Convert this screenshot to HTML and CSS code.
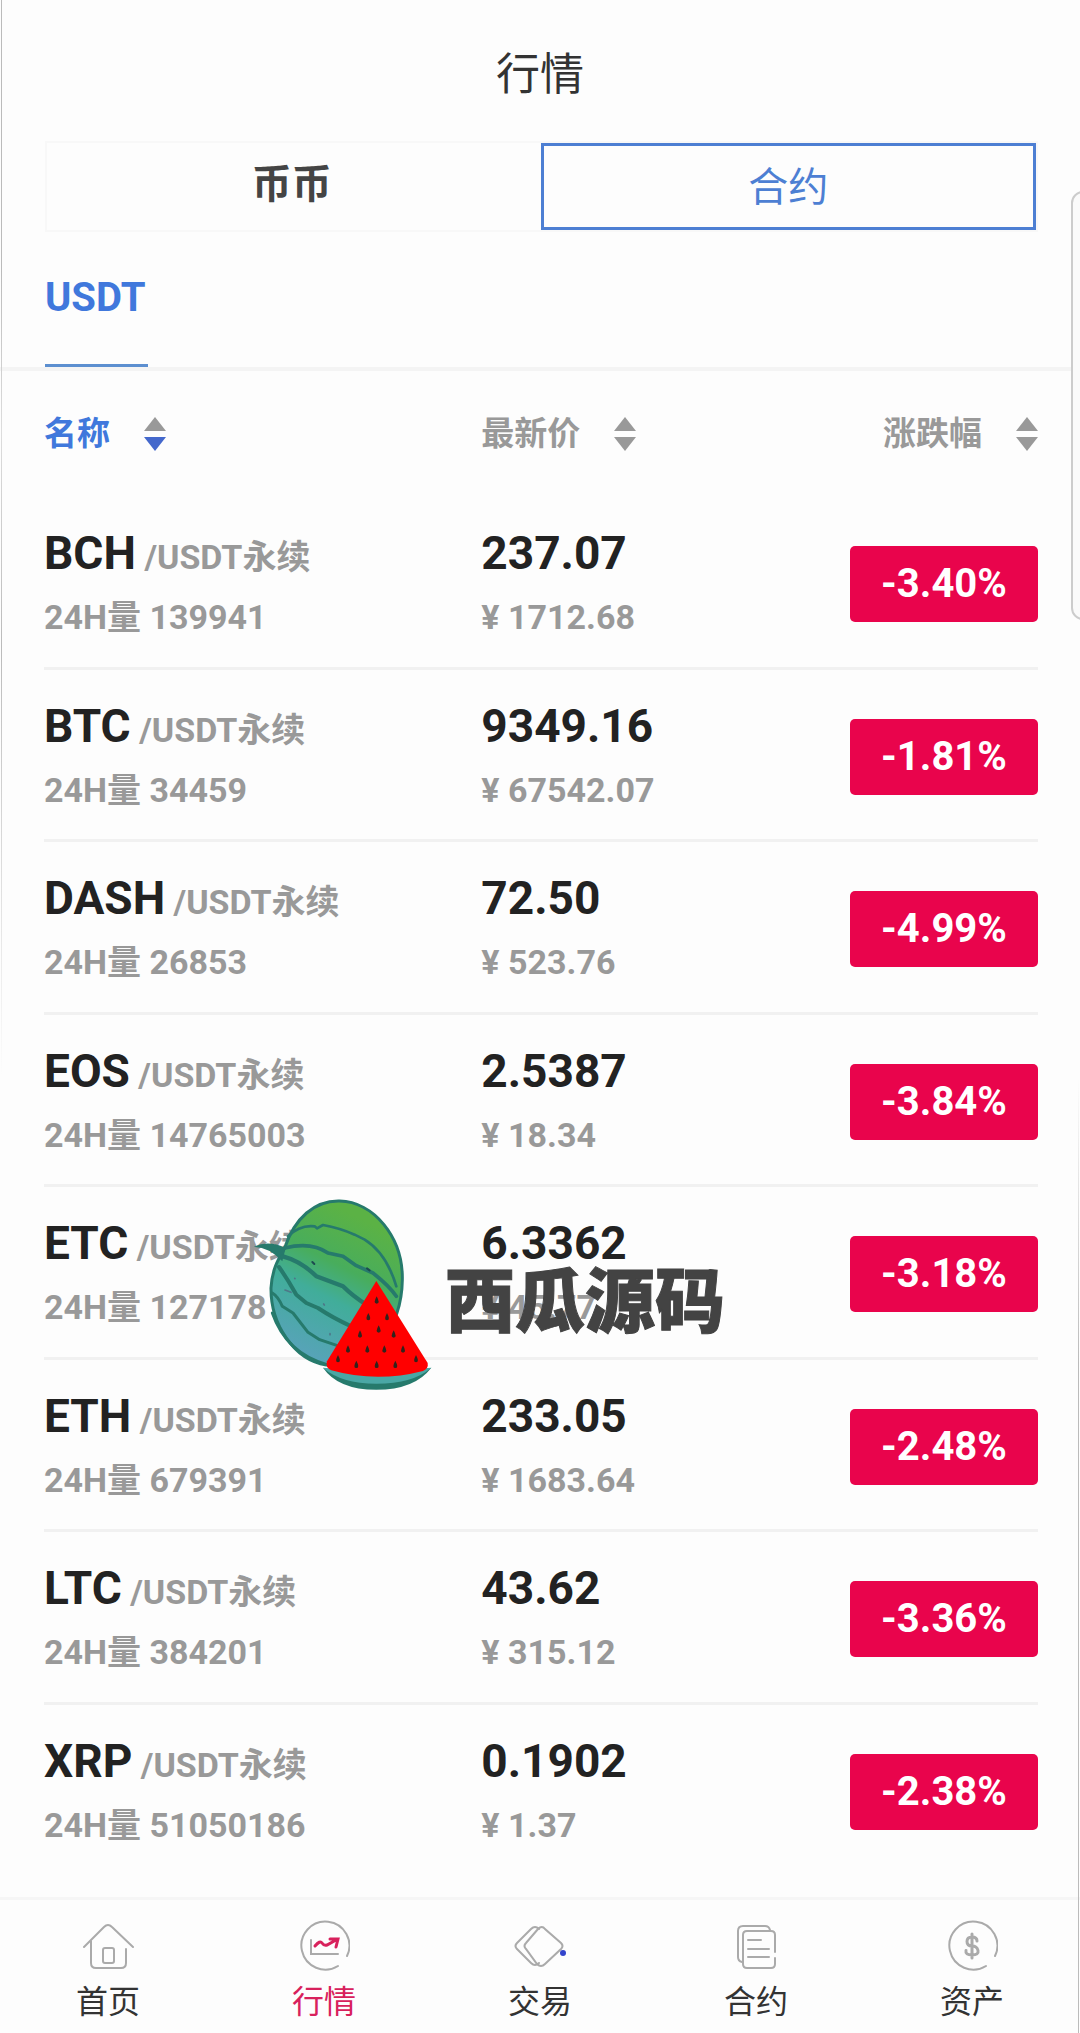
FILE: index.html
```html
<!DOCTYPE html>
<html lang="zh-CN">
<head>
    <meta charset="UTF-8">
    <meta name="viewport" content="width=device-width, initial-scale=1.0">
    <title>行情</title>
    <link rel="stylesheet" href="styles.css">
</head>
<body>
    <header class="header">
        <h1>行情</h1>
    </header>

    <div class="switch">
        <button type="button" class="switch-btn">币币</button>
        <button type="button" class="switch-btn active">合约</button>
    </div>

    <nav class="tabs">
        <a href="#usdt" class="tab">USDT</a>
    </nav>

    <table class="market">
        <thead>
            <tr>
                <th><button type="button" class="sort sort-active">名称 <svg class="arrows" viewBox="0 0 22 34"><path d="M11 0L22 14H0z"/><path class="down" d="M0 20h22L11 34z"/></svg></button></th>
                <th><button type="button" class="sort">最新价 <svg class="arrows" viewBox="0 0 22 34"><path d="M11 0L22 14H0z"/><path class="down" d="M0 20h22L11 34z"/></svg></button></th>
                <th><button type="button" class="sort">涨跌幅 <svg class="arrows" viewBox="0 0 22 34"><path d="M11 0L22 14H0z"/><path class="down" d="M0 20h22L11 34z"/></svg></button></th>
            </tr>
        </thead>
        <tbody>
            <tr>
                <td><div class="main">BCH<small> /USDT永续</small></div><div class="sub">24H量 139941</div></td>
                <td><div class="main">237.07</div><div class="sub">¥ 1712.68</div></td>
                <td><span class="change">-3.40%</span></td>
            </tr>
            <tr>
                <td><div class="main">BTC<small> /USDT永续</small></div><div class="sub">24H量 34459</div></td>
                <td><div class="main">9349.16</div><div class="sub">¥ 67542.07</div></td>
                <td><span class="change">-1.81%</span></td>
            </tr>
            <tr>
                <td><div class="main">DASH<small> /USDT永续</small></div><div class="sub">24H量 26853</div></td>
                <td><div class="main">72.50</div><div class="sub">¥ 523.76</div></td>
                <td><span class="change">-4.99%</span></td>
            </tr>
            <tr>
                <td><div class="main">EOS<small> /USDT永续</small></div><div class="sub">24H量 14765003</div></td>
                <td><div class="main">2.5387</div><div class="sub">¥ 18.34</div></td>
                <td><span class="change">-3.84%</span></td>
            </tr>
            <tr>
                <td><div class="main">ETC<small> /USDT永续</small></div><div class="sub">24H量 127178</div></td>
                <td><div class="main">6.3362</div><div class="sub">¥ 45.77</div></td>
                <td><span class="change">-3.18%</span></td>
            </tr>
            <tr>
                <td><div class="main">ETH<small> /USDT永续</small></div><div class="sub">24H量 679391</div></td>
                <td><div class="main">233.05</div><div class="sub">¥ 1683.64</div></td>
                <td><span class="change">-2.48%</span></td>
            </tr>
            <tr>
                <td><div class="main">LTC<small> /USDT永续</small></div><div class="sub">24H量 384201</div></td>
                <td><div class="main">43.62</div><div class="sub">¥ 315.12</div></td>
                <td><span class="change">-3.36%</span></td>
            </tr>
            <tr>
                <td><div class="main">XRP<small> /USDT永续</small></div><div class="sub">24H量 51050186</div></td>
                <td><div class="main">0.1902</div><div class="sub">¥ 1.37</div></td>
                <td><span class="change">-2.38%</span></td>
            </tr>
        </tbody>
    </table>

    <nav class="bottom-nav">
        <a href="#home">
            <svg viewBox="0 0 52 52"><path d="M2 27L22 7q4-4 8 0L51 27M9 21v22q0 5 5 5h25q5 0 5-5V29"/><rect x="21" y="28" width="11" height="15" rx="2"/></svg>
            首页
        </a>
        <a href="#market" class="current">
            <svg viewBox="0 0 52 52"><path d="M49 36A24 24 0 1 0 40 46"/><path d="M13 20v14h27"/><path class="red" d="M17 26q5-6 7-3t5 2l9-5M32 19l8 0-2 8"/></svg>
            行情
        </a>
        <a href="#trade">
            <svg viewBox="0 0 52 52"><path d="M25 9q-4-4-8 0L3 23q-3 3 0 6l14 14q4 4 8 0"/><path d="M24 9q4-4 7 0l16 14q3 3 0 6L31 44q-4 4-8 0L12 29q-3-3 0-6z"/><circle class="dot" cx="49" cy="33" r="3"/></svg>
            交易
        </a>
        <a href="#contract">
            <svg viewBox="0 0 52 52"><path d="M40 10q-1-4-5-4H13q-5 0-5 5v26q0 4 4 5"/><path d="M45 32V15q0-4-4-4H17q-4 0-4 4v29q0 4 4 4h24q4 0 4-4v-6M18 20h13M18 29h21M18 37h21"/></svg>
            合约
        </a>
        <a href="#assets">
            <svg viewBox="0 0 52 52"><path d="M49 36A24 24 0 1 0 40 46"/><path class="thick" d="M31 21q0-4-5-4t-5 4.500 5 4.500 6 4.500-6 4.500-6-4.500M26 14v24"/></svg>
            资产
        </a>
    </nav>

    <aside class="drawer-edge"></aside>

    <div class="watermark">
        <svg viewBox="40 55 540 579">
            <defs>
                <linearGradient id="rind" x1="0.700" y1="0" x2="0.300" y2="1">
                    <stop offset="0.100" stop-color="#5bb245"/>
                    <stop offset="0.400" stop-color="#48ad5c"/>
                    <stop offset="0.600" stop-color="#41ad9a"/>
                    <stop offset="1" stop-color="#5aa2bc"/>
                </linearGradient>
            </defs>
            <path d="M135 205C165 115 225 62 300 64C400 66 490 170 488 300C486 440 400 560 260 556C160 540 93 430 94 325C97 270 115 240 135 205Z" fill="url(#rind)" stroke="#267a6c" stroke-width="9"/>
            <path d="M42 202Q85 180 138 205L128 245Q85 200 42 202Z" fill="#267a6c"/>
            <g fill="none" stroke="#267a6c" stroke-linecap="round" stroke-linejoin="round">
                <path d="M145 170Q180 135 225 140L232 146L250 136Q300 145 345 165L375 180Q440 220 470 320" stroke-width="8"/>
                <path d="M135 205Q215 185 265 220L310 230L350 258L400 280Q450 320 470 350" stroke-width="11"/>
                <path d="M130 230Q185 245 230 290L270 305L310 320Q340 350 380 375" stroke-width="13"/>
                <path d="M118 262Q145 300 170 345L200 370L235 385Q280 415 335 440" stroke-width="12"/>
                <path d="M98 340Q115 350 128 380L160 400L205 458L240 480L300 500" stroke-width="9"/>
                <path d="M98 400Q140 520 260 554" stroke-width="9"/>
                <path d="M218 247l6 6M382 266l8 6" stroke="#1d4b50" stroke-width="6"/>
                <path d="M136 331l18 7M165 296l1 1M252 373l2 3M271 462v3" stroke="#4e7788" stroke-width="5"/>
            </g>
            <path d="M250 564Q410 625 575 564Q525 630 410 630Q295 630 250 564Z" fill="#267a6c"/>
            <path d="M250 564Q410 580 575 564Q520 612 410 612Q305 612 250 564Z" fill="#4aa7a5"/>
            <path d="M410 304L564 550Q567 567 550 574Q410 610 275 572Q256 564 262 545Z" fill="#f00"/>
            <g fill="#33231c">
                <path id="seed" d="M411 350q-12 22 0 22t0-22"/>
                <use href="#seed" x="-25" y="50"/><use href="#seed" x="31" y="50"/>
                <use href="#seed" x="6" y="87"/><use href="#seed" x="-50" y="102"/><use href="#seed" x="51" y="102"/>
                <use href="#seed" x="-86" y="147"/><use href="#seed" x="-28" y="147"/><use href="#seed" x="23" y="147"/><use href="#seed" x="79" y="147"/>
                <use href="#seed" x="-116" y="176"/><use href="#seed" x="118" y="176"/>
                <use href="#seed" x="-61" y="193"/><use href="#seed" y="193"/><use href="#seed" x="56" y="193"/>
            </g>
        </svg>
        <span>西瓜源码</span>
    </div>
</body>
</html>
```
FILE: styles.css
```css
* {
    box-sizing: border-box;
}
body {
    position: relative;
    display: flex;
    flex-direction: column;
    min-height: 100vh;
    margin: 0;
    overflow-x: hidden;
    background-color: #fdfdfd;
    color: #222;
    font-family: Roboto, "Noto Sans CJK SC", sans-serif;
}
/* thin shaded lines down the two sides of the screen */
body::before,
body::after {
    content: "";
    position: absolute;
    width: 1px;
}
body::before {
    top: 0;
    left: 1px;
    height: 53%;
    background: linear-gradient(#bbb 25%, #ddd 40%, #bbb 60%, transparent);
}
body::after {
    right: 1px;
    bottom: 0;
    height: 47%;
    background: linear-gradient(transparent, #bbb 30%);
}
button {
    padding: 0;
    border: none;
    background: none;
    font-family: inherit;
}
a {
    text-decoration: none;
}

/* title */
.header {
    padding: 43px 0 34px;
    text-align: center;
}
.header h1 {
    margin: 0;
    color: #333;
    font-size: 44px;
    font-weight: 400;
    line-height: 64px;
}

/* spot / contract switch */
.switch {
    display: flex;
    gap: 4px;
    height: 91px;
    margin: 0 42px 0 45px;
    border: 2px solid #f8f8f8;
}
.switch-btn {
    flex: 1;
    padding-bottom: 12px;
    color: #444;
    font-size: 40px;
    font-weight: 700;
}
.switch-btn.active {
    padding-bottom: 6px;
    border: 3px solid #4d7fd3;
    color: #4d7fd3;
    font-weight: 400;
}

.tabs {
    display: flex;
    height: 139px;
    padding: 0 45px;
    border-bottom: 4px solid #f4f4f4;
}
.tab {
    padding: 41px 3px 0 0;
    border-bottom: 3px solid #5c8fd0;
    color: #4078dc;
    font-size: 40px;
    font-weight: 700;
    line-height: 50px;
}

/* market list */
.market {
    display: flex;
    flex: 1;
    flex-direction: column;
    padding: 0 42px 20px 44px;
}
.market thead {
    display: block;
    height: 126px;
    padding-top: 37px;
}
.market tbody {
    display: grid;
    flex: 1;
    grid-auto-rows: 1fr;
}
.market tr {
    display: grid;
    grid-template-columns: 44% 1fr auto;
}
.market th,
.market td {
    padding: 0;
    text-align: left;
}
.market tbody tr {
    border-bottom: 3px solid #f1f1f1;
}
.market tbody tr:last-child {
    border-bottom-color: transparent;
}
.sort {
    display: flex;
    align-items: center;
    gap: 34px;
    color: #999;
    font-size: 33px;
    font-weight: 700;
    line-height: 52px;
}
.sort-active {
    color: #4078dc;
}
.arrows {
    width: 22px;
    height: 34px;
    fill: #999;
}
.sort-active .down {
    fill: #4468cc;
}
.main {
    padding-top: 26px;
    font-size: 46px;
    font-weight: 700;
    line-height: 60px;
}
.main small {
    color: #999;
    font-size: 34px;
    line-height: 1;
}
.sub {
    padding-top: 10px;
    color: #999;
    font-size: 34px;
    font-weight: 700;
    line-height: 48px;
}
.change {
    display: block;
    width: 188px;
    margin-top: 49px;
    border-radius: 5px;
    background-color: #e9044c;
    color: #fff;
    font-size: 40px;
    font-weight: 700;
    line-height: 76px;
    text-align: center;
}

/* bottom navigation */
.bottom-nav {
    display: flex;
    height: 136px;
    border-top: 3px solid #f6f6f6;
}
.bottom-nav a {
    display: flex;
    flex: 1;
    flex-direction: column;
    align-items: center;
    gap: 3px;
    padding-top: 20px;
    color: #333;
    font-size: 32px;
    line-height: 54px;
}
.bottom-nav .current {
    color: #d8215c;
}
.bottom-nav svg {
    width: 52px;
    height: 52px;
    fill: none;
    stroke: #aaa;
    stroke-width: 2;
    stroke-linecap: round;
}
.bottom-nav .red {
    stroke: #d8215c;
    stroke-width: 3;
}
.bottom-nav .thick {
    stroke-width: 3;
}
.bottom-nav .dot {
    fill: #3344cc;
    stroke: none;
}

/* edge of the side drawer */
.drawer-edge {
    position: absolute;
    top: 191px;
    right: -20px;
    width: 29px;
    height: 429px;
    border: 2px solid #ccc;
    border-radius: 12px;
    background-color: #fafafa;
}

.watermark {
    position: absolute;
    top: 1198px;
    left: 253px;
    display: flex;
    align-items: center;
    gap: 12px;
    color: #434343;
    font-size: 70px;
    font-weight: 900;
    line-height: 104px;
    white-space: nowrap;
    -webkit-text-stroke: 1px #434343;
}
.watermark span {
    padding-top: 16px;
}
.watermark svg {
    width: 180px;
    height: 193px;
}
```
